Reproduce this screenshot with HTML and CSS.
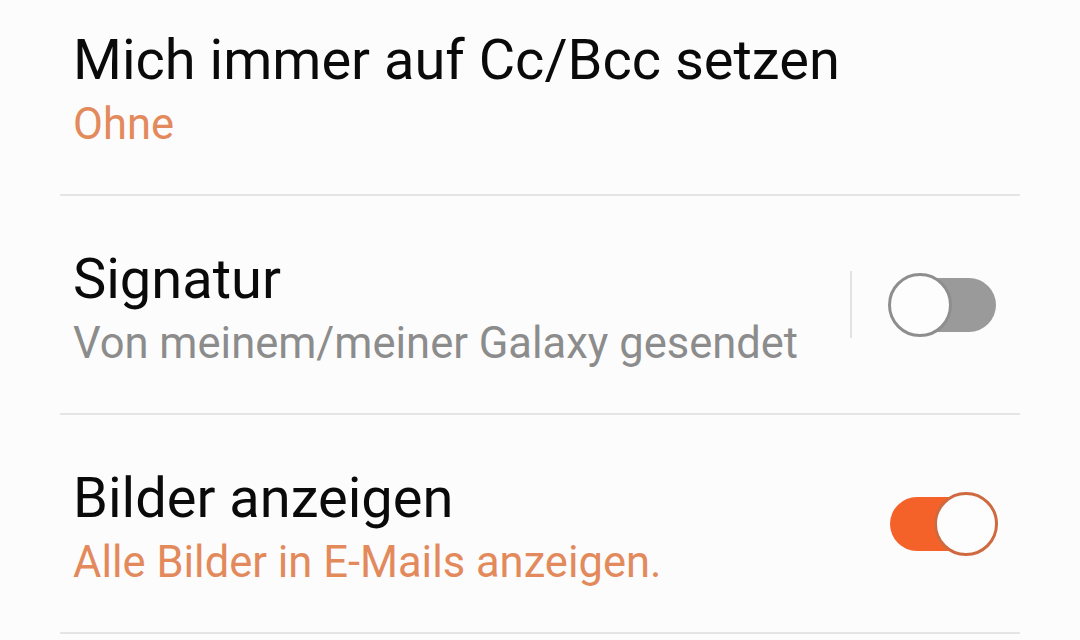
FILE: index.html
```html
<!DOCTYPE html>
<html lang="de">
<head>
<meta charset="utf-8">
<title>E-Mail Einstellungen</title>
<link rel="stylesheet" href="styles.css">
</head>
<body>
<div class="list">
  <div class="row">
    <div class="text">
      <div class="title">Mich immer auf Cc/Bcc setzen</div>
      <div class="sub sub-accent">Ohne</div>
    </div>
  </div>
  <div class="row">
    <div class="text">
      <div class="title">Signatur</div>
      <div class="sub sub-gray">Von meinem/meiner Galaxy gesendet</div>
    </div>
    <div class="sep"></div>
    <div class="toggle toggle-off"><span class="track"></span><span class="knob"></span></div>
  </div>
  <div class="row">
    <div class="text">
      <div class="title">Bilder anzeigen</div>
      <div class="sub sub-accent">Alle Bilder in E-Mails anzeigen.</div>
    </div>
    <div class="toggle toggle-on"><span class="track"></span><span class="knob"></span></div>
  </div>
</div>
</body>
</html>
```

FILE: styles.css
```css
html, body {
  margin: 0;
  padding: 0;
  background: #fcfcfc;
  width: 1080px;
  height: 640px;
  overflow: hidden;
  font-family: Roboto, "Noto Sans", sans-serif;
}

.list {
  margin: -23px 60px 0 60px;
}

.row {
  display: flex;
  align-items: center;
  height: 217px;
  padding: 0 22px 0 13px;
  border-bottom: 2px solid #e5e5e5;
}

.text {
  flex: 1;
  display: flex;
  flex-direction: column;
  margin-top: 9px;
}

.title {
  font-size: 56px;
  line-height: 62px;
  color: #0a0a0a;
}

.sub {
  font-size: 43.5px;
  line-height: 52px;
  margin-top: 8px;
}

.sub-accent { color: #e38a5d; }
.sub-gray { color: #8c8c8c; }

.sep {
  width: 2px;
  height: 67px;
  background: #e2e2e2;
  margin-right: 36px;
}

.toggle {
  position: relative;
  width: 110px;
  height: 64px;
}

.track {
  position: absolute;
  left: 2px;
  right: 2px;
  top: 5px;
  bottom: 5px;
  border-radius: 27px;
}

.knob {
  position: absolute;
  top: 0;
  width: 64px;
  height: 64px;
  box-sizing: border-box;
  border-radius: 50%;
  background: #fdfdfd;
}

.toggle-off .track { background: #9a9a9a; }
.toggle-off .knob { left: 0; border: 3px solid #8e8e8e; }

.toggle-on .track { background: #f4622a; }
.toggle-on .knob { right: 0; border: 3px solid #cf6a40; }
```
